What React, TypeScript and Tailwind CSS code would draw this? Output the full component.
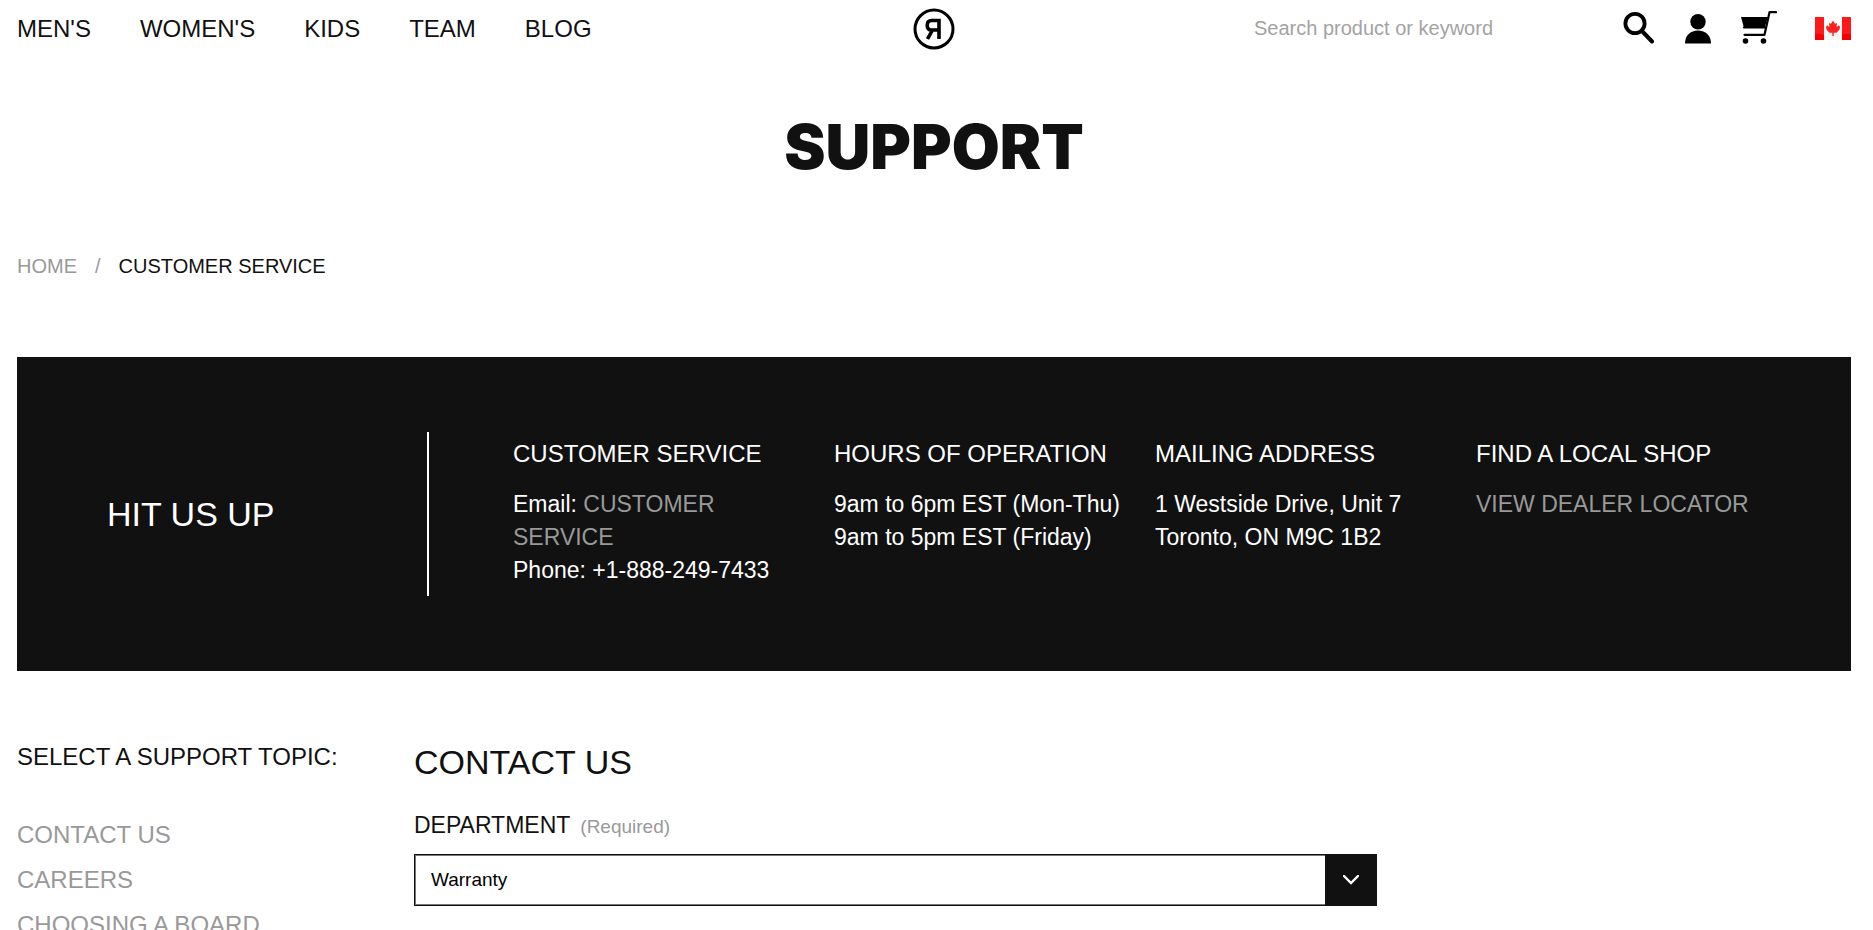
import type { ReactNode } from "react";

const navLinks = ["MEN'S", "WOMEN'S", "KIDS", "TEAM", "BLOG"];
const topics = ["CONTACT US", "CAREERS", "CHOOSING A BOARD"];

function Logo() {
  return (
    <svg width="42" height="42" viewBox="0 0 42 42" fill="none" aria-hidden="true">
      <circle cx="21" cy="21" r="19" stroke="#000" strokeWidth="3" />
      <path
        d="M26 31V12.500H18.500Q14.200 12.500 14.200 17.200T18.500 22H26M19.500 22L14.500 31"
        stroke="#000"
        strokeWidth="3.600"
      />
    </svg>
  );
}

function SearchIcon() {
  return (
    <svg width="32" height="32" viewBox="0 0 32 32" fill="none" stroke="#000" aria-hidden="true">
      <circle cx="12" cy="11.500" r="9.600" strokeWidth="3.800" />
      <path d="M19 19L29 29.500" strokeWidth="4" strokeLinecap="round" />
    </svg>
  );
}

function UserIcon() {
  return (
    <svg width="26" height="30" viewBox="0 0 26 30" aria-hidden="true">
      <circle cx="13" cy="7.700" r="7.700" />
      <path d="M0 29.500C0 21.500 5.500 16.500 13 16.500S26 21.500 26 29.500Z" />
    </svg>
  );
}

function CartIcon() {
  return (
    <svg width="36" height="33" viewBox="0 0 36 33" aria-hidden="true">
      <path d="M0 6H27L23.500 17H3Z" />
      <path
        d="M35 1.200H28.500L23.500 23.800H3.500M3 16.500H24"
        fill="none"
        stroke="#000"
        strokeWidth="2.200"
        strokeLinecap="round"
        strokeLinejoin="round"
      />
      <circle cx="4.500" cy="30" r="2.800" />
      <circle cx="22.500" cy="30" r="2.800" />
    </svg>
  );
}

function CanadaFlag() {
  return (
    <svg width="36" height="23" viewBox="0 0 36 23" aria-hidden="true">
      <path fill="#f6f6f6" d="M0 0H36V23H0Z" />
      <path fill="#fff" d="M9 0H27V12H9Z" />
      <path fill="#ff1a1a" d="M0 0H9V23H0ZM27 0H36V23H27Z" />
      <path fill="#f50000" d="M0 17Q5 16 9 18V23H0ZM27 18Q31 16 36 17V23H27Z" />
      <path
        fill="#fb2222"
        d="M18 3.500L20 6.800L22 6L21.600 10L24 8.200L25 10L24.500 12.500L21.500 15.800H18.700V19H17.300V15.800H14.500L11.500 12.500L11 10L12 8.200L14.400 10L14 6L16 6.800Z"
      />
    </svg>
  );
}

function InfoColumn({ title, children }: { title: string; children: ReactNode }) {
  return (
    <section className="pr-6">
      <h2 className="text-[24px] leading-[33px]">{title}</h2>
      <div className="mt-[18px] text-[23px] leading-[33px]">{children}</div>
    </section>
  );
}

export default function App() {
  return (
    <div className="h-screen overflow-hidden bg-white font-['Liberation_Sans',Arial,sans-serif] text-[#111]">
      <div className="pr-[22px] pl-[17px]">
        <header className="grid h-[57px] grid-cols-[1fr_auto_1fr] items-center">
          <nav aria-label="Main" className="flex gap-[49px] text-[24px] leading-[33px]">
            {navLinks.map((label) => (
              <a key={label} href="#">
                {label}
              </a>
            ))}
          </nav>
          <a href="#" aria-label="Ride home">
            <Logo />
          </a>
          <div className="flex items-center justify-end">
            <input
              type="search"
              aria-label="Search product or keyword"
              placeholder="Search product or keyword"
              className="mr-[49px] w-[320px] bg-transparent pb-[2px] text-[20px] leading-[30px] outline-none placeholder:text-[#a3a3a3]"
            />
            <button type="button" aria-label="Search" className="mr-[30px] pb-[2px]">
              <SearchIcon />
            </button>
            <a href="#" aria-label="Account" className="mr-[30px]">
              <UserIcon />
            </a>
            <a href="#" aria-label="Cart" className="mr-[38px] pb-[2px]">
              <CartIcon />
            </a>
            <button type="button" aria-label="Canada">
              <CanadaFlag />
            </button>
          </div>
        </header>

        <main>
          <h1 className="mt-[50px] text-center font-['Inter',sans-serif] text-[62px] leading-[80px] font-black">
            SUPPORT
          </h1>

          <nav aria-label="Breadcrumb" className="mt-[64px] flex gap-[18px] text-[20px] leading-[30px]">
            <a href="#" className="text-[#999]">
              HOME
            </a>
            <span className="text-[#999]">/</span>
            <span>CUSTOMER SERVICE</span>
          </nav>

          <div className="mt-[76px] flex bg-[#111] pr-[38px] pl-[90px] py-[75px] text-white">
            <div className="flex w-[322px] shrink-0 items-center border-r-2 border-white">
              <p className="text-[34px] leading-[40px]">HIT US UP</p>
            </div>
            <div className="grid flex-1 grid-cols-4 pt-[5px] pr-4 pb-[9px] pl-[84px]">
              <InfoColumn title="CUSTOMER SERVICE">
                Email:{" "}
                <a href="#" className="text-[#999]">
                  CUSTOMER SERVICE
                </a>
                <br />
                Phone: +1-888-249-7433
              </InfoColumn>
              <InfoColumn title="HOURS OF OPERATION">
                9am to 6pm EST (Mon-Thu)
                <br />
                9am to 5pm EST (Friday)
              </InfoColumn>
              <InfoColumn title="MAILING ADDRESS">
                1 Westside Drive, Unit 7
                <br />
                Toronto, ON M9C 1B2
              </InfoColumn>
              <InfoColumn title="FIND A LOCAL SHOP">
                <a href="#" className="text-[#999]">
                  VIEW DEALER LOCATOR
                </a>
              </InfoColumn>
            </div>
          </div>

          <div className="mt-[69px] flex">
            <aside className="w-[397px] shrink-0">
              <h2 className="text-[24px] leading-[33px]">SELECT A SUPPORT TOPIC:</h2>
              <ul className="mt-[39px] text-[24px] leading-[45px]">
                {topics.map((topic) => (
                  <li key={topic}>
                    <a href="#" className="text-[#999]">
                      {topic}
                    </a>
                  </li>
                ))}
              </ul>
            </aside>
            <form className="w-[963px]">
              <h2 className="text-[34px] leading-[44px]">CONTACT US</h2>
              <label htmlFor="department" className="mt-[25px] block text-[23px] leading-[33px]">
                DEPARTMENT <span className="ml-1 text-[19px] text-[#999]">(Required)</span>
              </label>
              <div className="mt-[11px] grid h-[52px] border border-[#111] bg-white">
                <select
                  id="department"
                  defaultValue="Warranty"
                  className="col-start-1 row-start-1 appearance-none border border-[#777] bg-transparent pl-[15px] text-[19px] text-black outline-none"
                >
                  <option>Warranty</option>
                </select>
                <span className="pointer-events-none col-start-1 row-start-1 flex w-[51px] items-center justify-center justify-self-end bg-[#111]">
                  <svg width="16" height="10" viewBox="0 0 16 10" fill="none" aria-hidden="true">
                    <path d="M1 1L8 8L15 1" stroke="#fff" strokeWidth="2.400" strokeLinecap="round" />
                  </svg>
                </span>
              </div>
            </form>
          </div>
        </main>
      </div>
    </div>
  );
}
